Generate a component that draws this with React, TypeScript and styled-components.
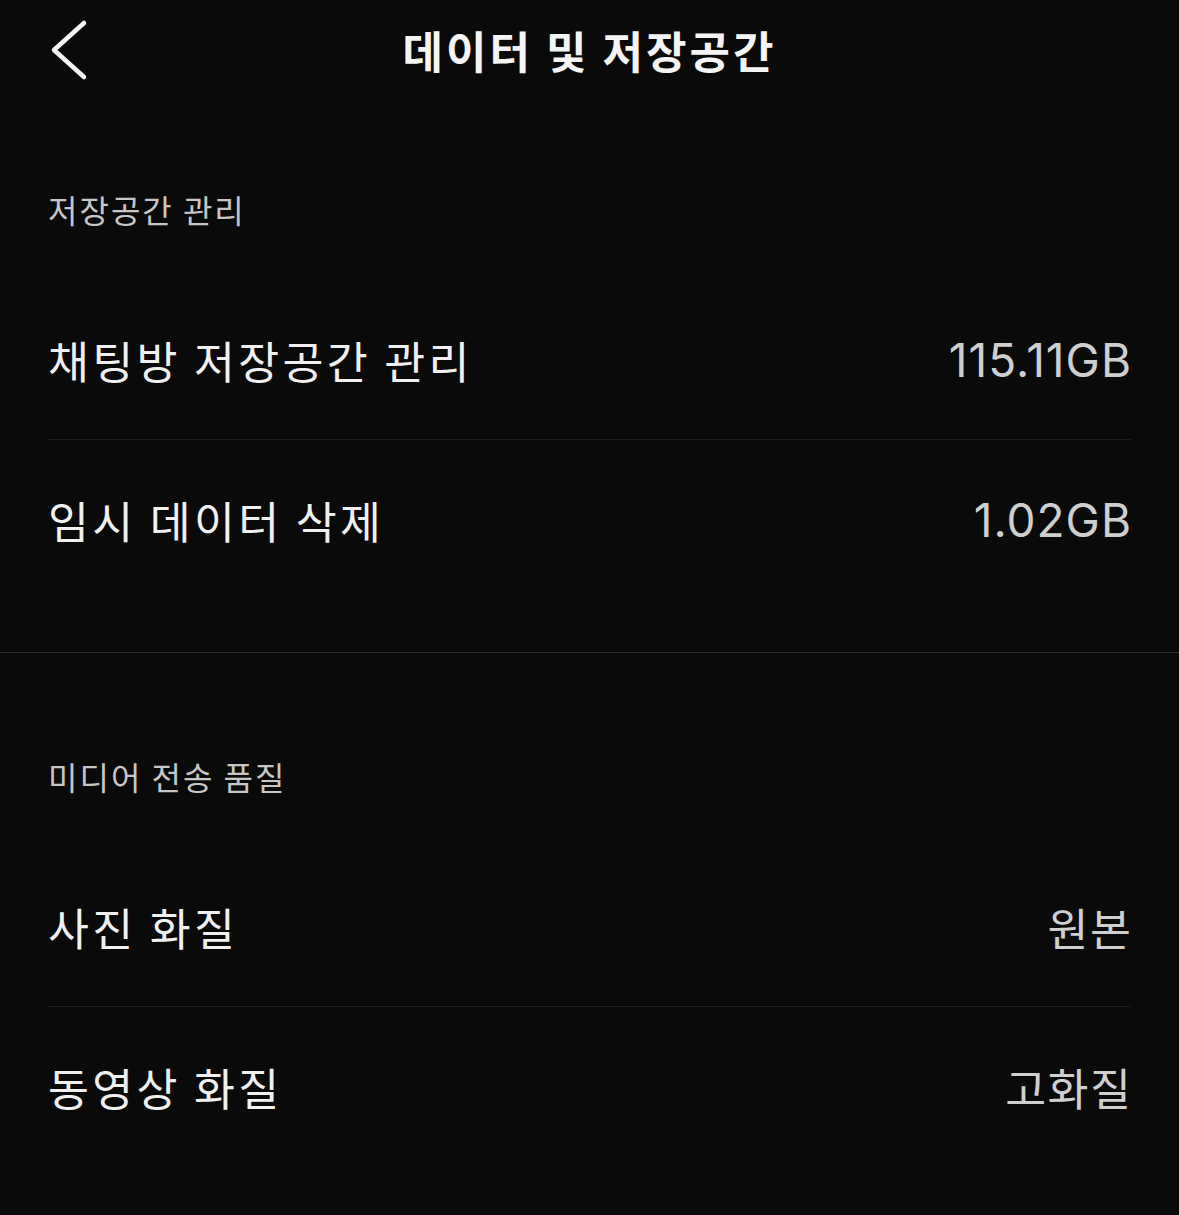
import styled, { createGlobalStyle } from 'styled-components'

const GlobalStyle = createGlobalStyle`
    html, body {
        margin: 0;
        padding: 0;
        background-color: #0a0a0a;
    }
    body {
        font-family: 'Noto Sans CJK KR', 'Noto Sans', sans-serif;
        -webkit-font-smoothing: antialiased;
    }
`

const Screen = styled.div`
    width: 1179px;
    min-height: 1215px;
    background-color: #0a0a0a;
    display: flex;
    flex-direction: column;
`

const Header = styled.header`
    position: relative;
    height: 100px;
    display: flex;
    align-items: center;
    justify-content: center;

    h1 {
        margin: 0;
        font-size: 44px;
        font-weight: 700;
        color: #f4f4f4;
        letter-spacing: 3px;
    }
`

const BackButton = styled.button`
    position: absolute;
    left: 44px;
    top: 14px;
    width: 50px;
    height: 72px;
    padding: 0;
    border: none;
    background: none;
    cursor: pointer;
    display: flex;
    align-items: center;
    justify-content: center;
`

const Section = styled.section<{ $top: number; $divider?: boolean }>`
    padding: ${(props) => props.$top}px 48px 53px 48px;
    border-bottom: ${(props) => (props.$divider ? '1px solid #2a2a2a' : 'none')};
`

const SectionTitle = styled.h2`
    margin: 0 0 51px 0;
    height: 40px;
    line-height: 40px;
    font-size: 32px;
    font-weight: 400;
    letter-spacing: 2px;
    color: #c6c6c6;
`

const Row = styled.div`
    height: 159px;
    display: flex;
    align-items: center;
    justify-content: space-between;

    & + & {
        border-top: 1px solid #1e1e1e;
    }
`

const Label = styled.span`
    font-size: 44.5px;
    font-weight: 400;
    letter-spacing: 3.3px;
    color: #f0f0f0;
`

const Value = styled.span<{ $latin?: boolean }>`
    font-family: ${(props) =>
        props.$latin ? "Inter, 'Noto Sans CJK KR', sans-serif" : "'Noto Sans CJK KR', sans-serif"};
    font-size: ${(props) => (props.$latin ? '46px' : '44.5px')};
    letter-spacing: ${(props) => (props.$latin ? '1px' : '1.5px')};
    margin-right: ${(props) => (props.$latin ? '-1px' : '-1.5px')};
    font-weight: 400;
    color: #cfcfcf;
`

interface IItem {
    label: string
    value: string
    latin?: boolean
}

const storage: IItem[] = [
    { label: '채팅방 저장공간 관리', value: '115.11GB', latin: true },
    { label: '임시 데이터 삭제', value: '1.02GB', latin: true },
]

const media: IItem[] = [
    { label: '사진 화질', value: '원본' },
    { label: '동영상 화질', value: '고화질' },
]

function Rows({ items }: { items: IItem[] }) {
    return (
        <>
            {items.map((item) => (
                <Row key={item.label}>
                    <Label>{item.label}</Label>
                    <Value $latin={item.latin}>{item.value}</Value>
                </Row>
            ))}
        </>
    )
}

export default function App() {
    return (
        <Screen>
            <GlobalStyle />
            <Header>
                <BackButton aria-label="뒤로">
                    <svg width="50" height="72" viewBox="0 0 50 72">
                        <path
                            d="M40 9 L10 36 L40 63"
                            fill="none"
                            stroke="#f4f4f4"
                            strokeWidth="4.5"
                            strokeLinecap="round"
                            strokeLinejoin="round"
                        />
                    </svg>
                </BackButton>
                <h1>데이터 및 저장공간</h1>
            </Header>
            <Section $top={89} $divider>
                <SectionTitle>저장공간 관리</SectionTitle>
                <Rows items={storage} />
            </Section>
            <Section $top={103}>
                <SectionTitle>미디어 전송 품질</SectionTitle>
                <Rows items={media} />
            </Section>
        </Screen>
    )
}
